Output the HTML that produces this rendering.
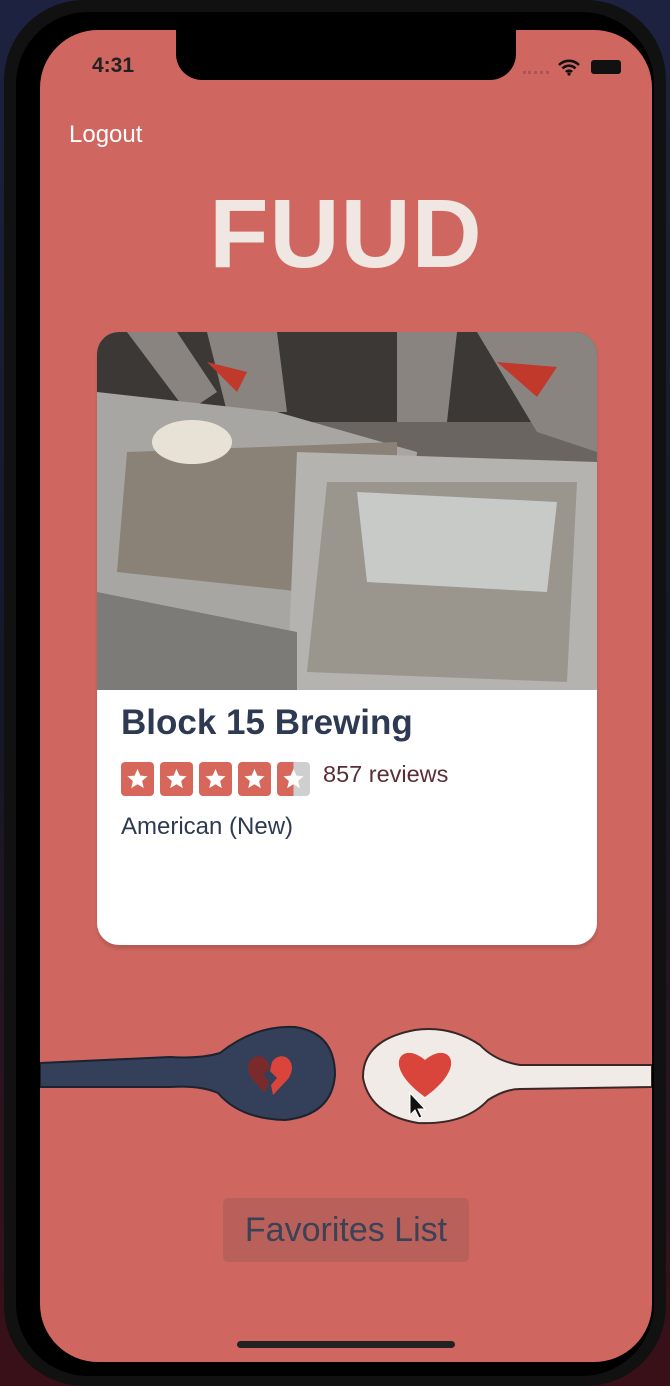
<!DOCTYPE html>
<html><head><meta charset="utf-8"><style>
*{margin:0;padding:0;box-sizing:border-box}
body{width:670px;height:1386px;overflow:hidden;background:linear-gradient(#1c2240 0%,#141828 50%,#3a1018 100%);font-family:"Liberation Sans",sans-serif;position:relative}
.phone{position:absolute;left:4px;top:0;width:662px;height:1386px;background:#111;border-radius:80px;}
.bezel{position:absolute;left:12px;top:12px;right:12px;bottom:10px;background:#000;border-radius:72px}
.screen{position:absolute;left:40px;top:30px;width:612px;height:1332px;background:#cf6760;border-radius:58px;overflow:hidden}
.notch{position:absolute;left:136px;top:0;width:340px;height:50px;background:#000;border-radius:0 0 26px 26px}
.abs{position:absolute}
.card{position:absolute;left:57px;top:302px;width:500px;height:613px;background:#fff;border-radius:22px;overflow:hidden;box-shadow:0 4px 3px rgba(0,0,0,.12)}
.star{position:absolute;top:0;width:33px;height:34px;background:#d6675a;border-radius:4px}
.star svg{position:absolute;left:5px;top:5px}
</style></head><body>
<div class="phone"><div class="bezel"></div></div>
<div class="screen">
<div class="notch"></div>
<div class="abs" style="left:52px;top:24px;font-size:21px;font-weight:bold;color:#222">4:31</div>
<div class="abs" style="left:483px;top:41px;width:26px;height:4px;border-top:3px dotted #a55"></div>
<svg class="abs" style="left:517px;top:28px" width="24" height="18" viewBox="0 0 24 18"><path d="M2 7a14 14 0 0 1 20 0M5.5 10.5a9 9 0 0 1 13 0M9 14a4 4 0 0 1 6 0" stroke="#111" stroke-width="2.6" fill="none"/><circle cx="12" cy="16" r="1.6" fill="#111"/></svg>
<div class="abs" style="left:551px;top:30px;width:30px;height:14px;background:#111;border-radius:3px"></div>
<div class="abs" style="left:29px;top:91px;font-size:24px;color:#fff">Logout</div>
<div class="abs" style="left:0;width:612px;top:148px;text-align:center;font-size:97px;font-weight:bold;color:#f0e6e2;letter-spacing:1px">FUUD</div>
<div class="card">
<svg width="500" height="358" viewBox="0 0 500 358">
<rect width="500" height="358" fill="#6a6560"/>
<rect width="500" height="90" fill="#3c3836"/>
<path d="M30 0 L80 0 L120 60 L90 80Z M110 0h70l10 80h-60Z M300 0h60l-10 90h-50Z M380 0h120v120l-60-20Z" fill="#8a8480"/>
<path d="M110 30 l40 10 -10 20Z M400 30 l60 5 -20 30Z" fill="#c0392b"/>
<path d="M0 60 L180 80 L320 120 L300 358 L0 358Z" fill="#a8a6a2"/>
<path d="M30 120 L300 110 L300 270 L20 240Z" fill="#8b8277"/>
<path d="M200 120 L500 130 L500 358 L190 358Z" fill="#b5b3b0"/>
<path d="M230 150 L480 150 L470 350 L210 340Z" fill="#9a968e"/>
<path d="M260 160 L460 170 L450 260 L270 250Z" fill="#c8cac8"/>
<ellipse cx="95" cy="110" rx="40" ry="22" fill="#e8e2d6"/>
<path d="M0 260 L200 300 L200 358 L0 358Z" fill="#7d7b78"/>
</svg>
<div class="abs" style="left:24px;top:371px;font-size:35px;font-weight:bold;color:#2e3a52">Block 15 Brewing</div>
<div class="abs" style="left:24px;top:430px;width:190px;height:34px">
<div class="star" style="left:0"><svg width="23" height="23" viewBox="0 0 24 24"><path d="M12 2l3 7 7.5.6-5.7 5 1.8 7.4L12 18l-6.6 4 1.8-7.4-5.7-5L9 9z" fill="#fff"/></svg></div>
<div class="star" style="left:39px"><svg width="23" height="23" viewBox="0 0 24 24"><path d="M12 2l3 7 7.5.6-5.7 5 1.8 7.4L12 18l-6.6 4 1.8-7.4-5.7-5L9 9z" fill="#fff"/></svg></div>
<div class="star" style="left:78px"><svg width="23" height="23" viewBox="0 0 24 24"><path d="M12 2l3 7 7.5.6-5.7 5 1.8 7.4L12 18l-6.6 4 1.8-7.4-5.7-5L9 9z" fill="#fff"/></svg></div>
<div class="star" style="left:117px"><svg width="23" height="23" viewBox="0 0 24 24"><path d="M12 2l3 7 7.5.6-5.7 5 1.8 7.4L12 18l-6.6 4 1.8-7.4-5.7-5L9 9z" fill="#fff"/></svg></div>
<div class="star" style="left:156px;background:linear-gradient(90deg,#d6675a 50%,#cfcfcf 50%)"><svg width="23" height="23" viewBox="0 0 24 24"><path d="M12 2l3 7 7.5.6-5.7 5 1.8 7.4L12 18l-6.6 4 1.8-7.4-5.7-5L9 9z" fill="#fff"/></svg></div>
</div>
<div class="abs" style="left:226px;top:429px;font-size:23.5px;color:#5a2e38">857 reviews</div>
<div class="abs" style="left:24px;top:481px;font-size:24px;color:#2e3a52">American (New)</div>
</div>
<svg class="abs" style="left:0;top:985px" width="612" height="120" viewBox="0 0 612 120">
<path d="M0 48 L130 42 Q160 44 180 38 Q215 10 255 12 Q295 18 295 60 Q292 100 245 105 Q200 104 178 78 Q160 70 130 72 L0 72Z" fill="#34405a" stroke="#1d2230" stroke-width="2"/>
<path d="M228 47c-10-14-28 0-16 17l13 14 4-12-6-6 7-7z" fill="#7a2a2a"/>
<path d="M232 47c10-14 28 0 16 17l-15 16 -2-10 6-7-7-7z" fill="#d9453b"/>
<path d="M612 50 L480 50 Q455 46 440 30 Q410 10 375 15 Q322 25 323 63 Q330 100 378 108 Q425 110 448 85 Q465 74 480 74 L612 72Z" fill="#f0ebe6" stroke="#3a2626" stroke-width="2"/>
<path d="M385 82 C340 50 362 25 385 45 C408 25 430 50 385 82Z" fill="#d9453b"/>
<path d="M370 78 l0 22 5-5 4 8 3-1-4-8 7 0z" fill="#111" stroke="#fff" stroke-width="1"/>
</svg>
<div class="abs" style="left:183px;top:1168px;width:246px;height:64px;background:#b9605b;border-radius:5px;text-align:center;line-height:64px;font-size:34px;color:#3a4256">Favorites List</div>
<div class="abs" style="left:197px;top:1311px;width:218px;height:7px;background:#222;border-radius:4px"></div>
</div>
</body></html>
